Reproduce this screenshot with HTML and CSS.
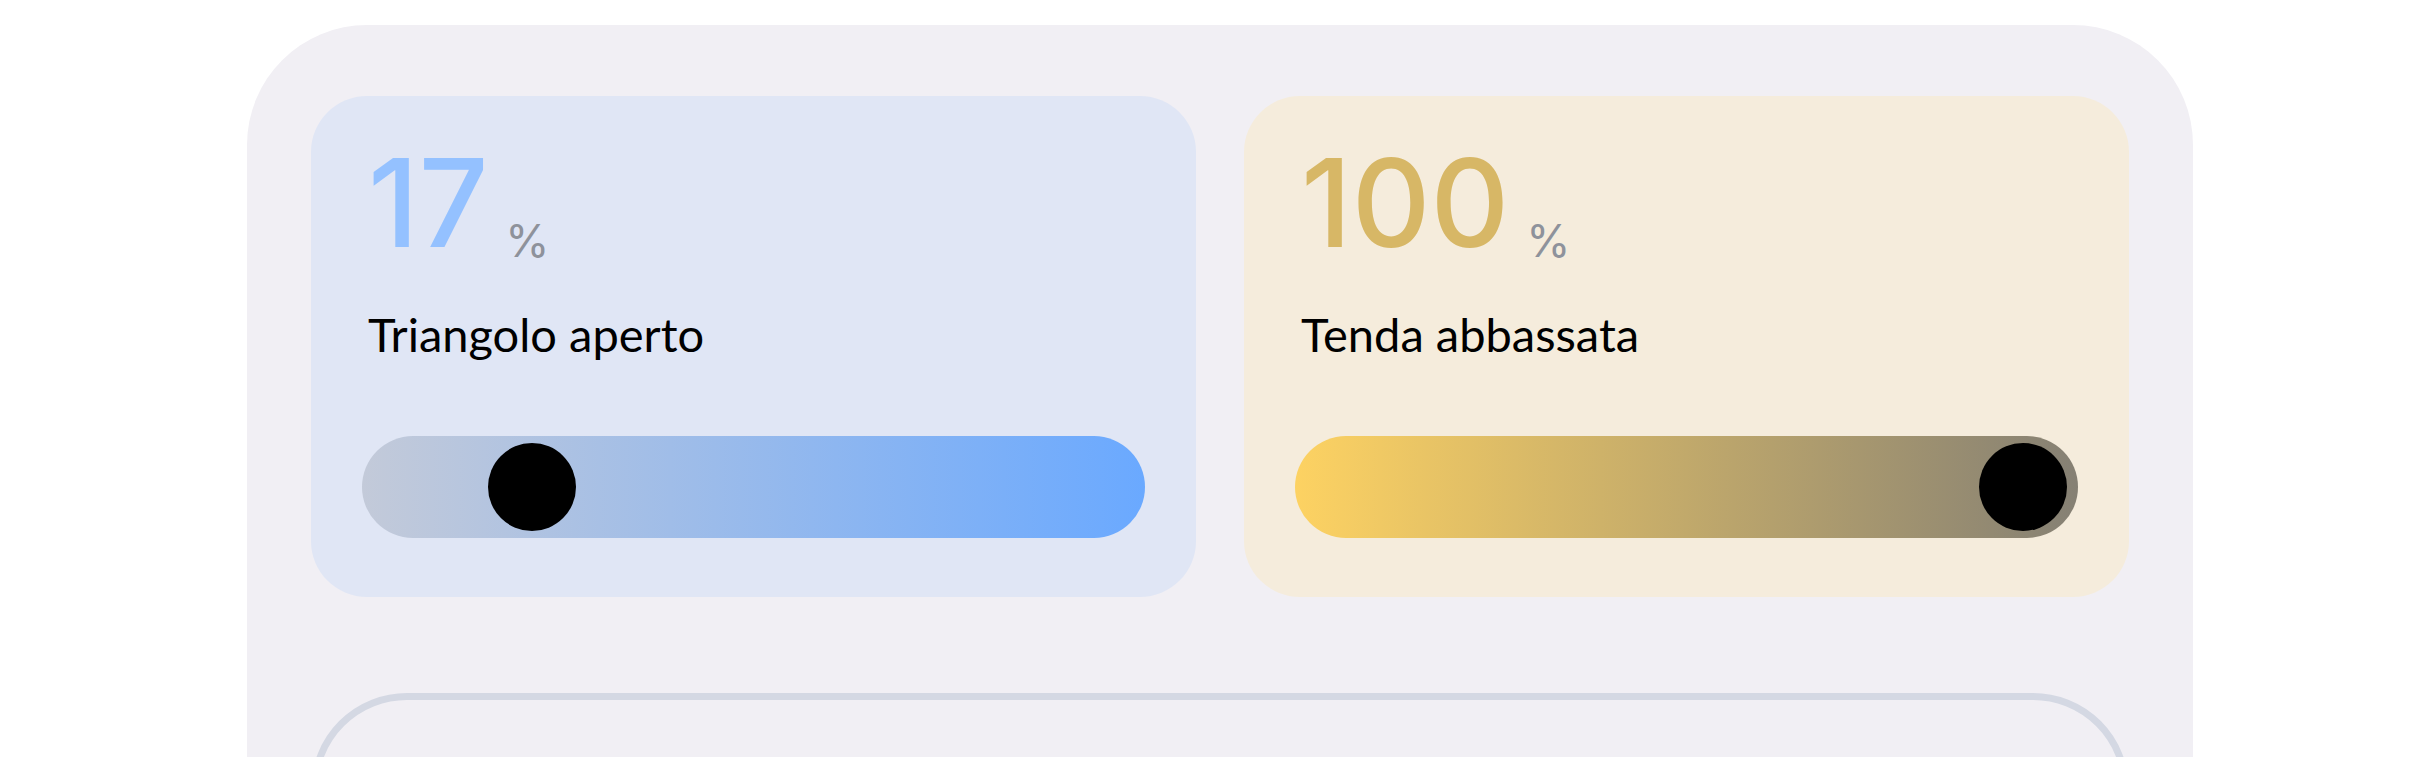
FILE: index.html
```html
<!DOCTYPE html>
<html lang="it">
<head>
<meta charset="utf-8">
<title>Controlli</title>
<link rel="stylesheet" href="styles.css">
</head>
<body>
<main class="panel">
  <section class="cards">
    <article class="card card-blue">
      <div class="value"><span class="num">17</span><span class="unit">%</span></div>
      <div class="label">Triangolo aperto</div>
      <div class="track track-blue">
        <div class="thumb" style="left: 126px"></div>
      </div>
    </article>
    <article class="card card-gold">
      <div class="value"><span class="num">100</span><span class="unit">%</span></div>
      <div class="label">Tenda abbassata</div>
      <div class="track track-gold">
        <div class="thumb" style="left: 684px"></div>
      </div>
    </article>
  </section>
  <section class="outline-box"></section>
</main>
</body>
</html>
```

FILE: styles.css
```css
html, body {
  margin: 0;
  padding: 0;
  background: #ffffff;
  overflow: hidden;
}

body {
  width: 2428px;
  height: 757px;
}

.panel {
  box-sizing: border-box;
  width: 1946px;
  margin: 25px 0 0 247px;
  padding: 71px 64px 0 64px;
  height: 1000px;
  background: #f1eff4;
  border-radius: 120px;
}

.cards {
  display: grid;
  grid-template-columns: 885px 885px;
  column-gap: 48px;
}

.card {
  box-sizing: border-box;
  height: 501px;
  border-radius: 56px;
  padding: 46px 51px 59px 51px;
  display: flex;
  flex-direction: column;
}

.card-blue {
  background: #e0e6f5;
}

.card-gold {
  background: #f5ecdc;
}

.value {
  height: 122px;
  line-height: 122px;
  padding-left: 6px;
  font-family: Inter, "Noto Sans", sans-serif;
  white-space: nowrap;
}

.num {
  font-size: 122px;
  font-weight: 500;
  letter-spacing: 0;
}

.card-blue .num {
  color: #94c1ff;
}

.card-gold .num {
  color: #d7b766;
}

.unit {
  font-size: 45px;
  line-height: 1;
  color: #8e929b;
  vertical-align: -10px;
  margin-left: 17px;
}

.label {
  margin-top: 42px;
  padding-left: 6px;
  font-family: Lato, "Noto Sans", sans-serif;
  font-size: 47px;
  line-height: 56px;
  color: #000000;
}

.track {
  position: relative;
  margin-top: 74px;
  height: 102px;
  border-radius: 51px;
}

.track-blue {
  background: linear-gradient(to right, #c3cad9 0%, #6aa9ff 100%);
}

.track-gold {
  background: linear-gradient(to right, #fdd262 0%, #858074 100%);
}

.thumb {
  position: absolute;
  top: 7px;
  width: 88px;
  height: 88px;
  border-radius: 50%;
  background: #000000;
}

.outline-box {
  box-sizing: border-box;
  margin-top: 96px;
  height: 300px;
  border: 7px solid #d4d8e3;
  border-radius: 96px;
}
```
